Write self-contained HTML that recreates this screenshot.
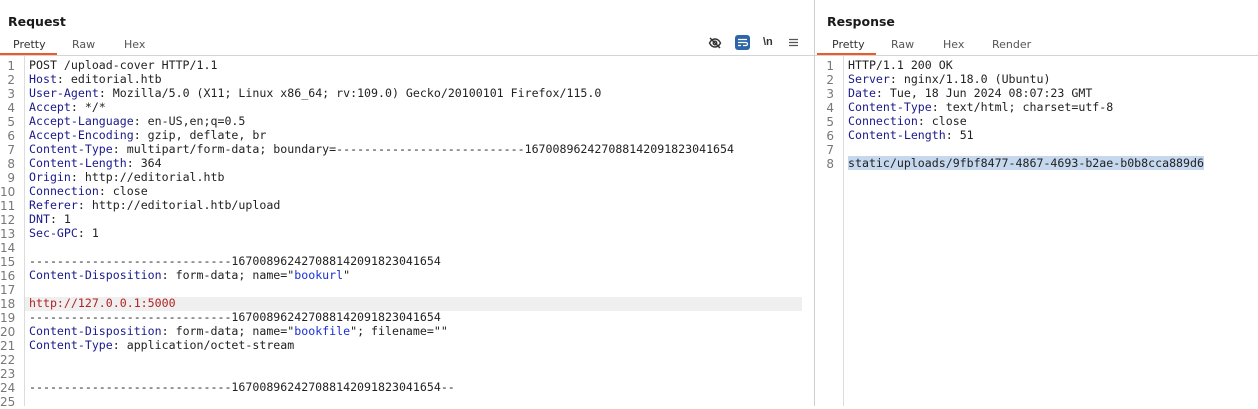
<!DOCTYPE html>
<html><head><meta charset="utf-8"><style>
*{margin:0;padding:0;box-sizing:border-box}
body{width:1258px;height:406px;background:#fff;font-family:"Liberation Sans","DejaVu Sans",sans-serif;position:relative;overflow:hidden;color:#222}
.pane{position:absolute;top:0;height:406px}
.title{position:absolute;top:14px;font-weight:bold;font-size:12.5px;color:#1a1a1a;font-family:"DejaVu Sans",sans-serif}
.tabs{position:absolute;top:36px;left:0;right:0;height:20px;border-bottom:1px solid #d4d4d4}
.tab{position:absolute;top:2px;font-size:11px;color:#555;font-family:"DejaVu Sans",sans-serif}
.tab.a{color:#333}
.ul{position:absolute;top:17px;height:2px;background:#ec5b2c}
.code{position:absolute;top:58px;font-family:"DejaVu Sans Mono",monospace;font-size:11.6px;line-height:14px;white-space:pre;color:#222}
.nums{position:absolute;top:59px;font-family:"DejaVu Sans",sans-serif;font-size:12px;line-height:14px;color:#777;text-align:right;white-space:pre}
.gut{position:absolute;top:56px;bottom:0;width:1px;background:#dcdcdc}
.k{color:#1a1a8c}.s{color:#1a2fd6}.r{color:#b22222}
.hl{position:absolute;height:14px;background:#efefef}
.sel{background:#c6d8ee}
</style></head><body>
<div class="pane" style="left:0;width:814px">
<div class="title" style="left:8px">Request</div>
<div class="tabs">
<div class="tab a" style="left:13px">Pretty</div>
<div class="tab" style="left:72px">Raw</div>
<div class="tab" style="left:124px">Hex</div>
<div class="ul" style="left:0;width:57px"></div>
<svg style="position:absolute;left:708px;top:0" width="14" height="14" viewBox="0 0 14 14"><path d="M1.5 7c1.5-3 3.5-4 5.5-4s4 1 5.5 4c-1.5 3-3.5 4-5.5 4s-4-1-5.5-4z" fill="none" stroke="#333" stroke-width="1.4"/><circle cx="7" cy="7" r="1.8" fill="none" stroke="#333" stroke-width="1.3"/><path d="M2 2l10 10" stroke="#333" stroke-width="1.5"/></svg>
<div style="position:absolute;left:735px;top:-1px;width:15px;height:15px;background:#2d66a8;border-radius:3px"><svg width="15" height="15" viewBox="0 0 15 15"><path d="M3 4.5h9M3 7.5h8a1.5 1.5 0 0 1 0 3H8M3 10.5h3" fill="none" stroke="#fff" stroke-width="1.2"/></svg></div>
<div style="position:absolute;left:763px;top:0;font-size:11px;font-weight:bold;color:#333">\n</div>
<svg style="position:absolute;left:789px;top:2px" width="9" height="9"><path d="M0 1.5h9M0 4.5h9M0 7.5h9" stroke="#555" stroke-width="1.3"/></svg>
</div>
<div class="gut" style="left:24px"></div>
<div class="hl" style="left:25px;width:777px;top:297px"></div>
<div class="nums" style="left:0;width:15px">1
2
3
4
5
6
7
8
9
10
11
12
13
14
15
16
17
18
19
20
21
22
23
24
25</div>
<div class="code" style="left:29px">POST /upload-cover HTTP/1.1
<span class="k">Host</span>: editorial.htb
<span class="k">User-Agent</span>: Mozilla/5.0 (X11; Linux x86_64; rv:109.0) Gecko/20100101 Firefox/115.0
<span class="k">Accept</span>: */*
<span class="k">Accept-Language</span>: en-US,en;q=0.5
<span class="k">Accept-Encoding</span>: gzip, deflate, br
<span class="k">Content-Type</span>: multipart/form-data; boundary=---------------------------167008962427088142091823041654
<span class="k">Content-Length</span>: 364
<span class="k">Origin</span>: http://editorial.htb
<span class="k">Connection</span>: close
<span class="k">Referer</span>: http://editorial.htb/upload
<span class="k">DNT</span>: 1
<span class="k">Sec-GPC</span>: 1

-----------------------------167008962427088142091823041654
<span class="k">Content-Disposition</span>: form-data; name="<span class="s">bookurl</span>"

<span class="r">http://127.0.0.1:5000</span>
-----------------------------167008962427088142091823041654
<span class="k">Content-Disposition</span>: form-data; name="<span class="s">bookfile</span>"; filename="<span class="s"></span>"
<span class="k">Content-Type</span>: application/octet-stream


-----------------------------167008962427088142091823041654--
</div>
</div>
<div style="position:absolute;left:814px;top:0;width:1px;height:406px;background:#cfcfcf"></div>
<div class="pane" style="left:815px;width:443px">
<div class="title" style="left:12px">Response</div>
<div class="tabs">
<div class="tab a" style="left:17px">Pretty</div>
<div class="tab" style="left:76px">Raw</div>
<div class="tab" style="left:128px">Hex</div>
<div class="tab" style="left:177px">Render</div>
<div class="ul" style="left:2px;width:59px"></div>
</div>
<div class="gut" style="left:28px"></div>
<div class="nums" style="left:0;width:19px">1
2
3
4
5
6
7
8</div>
<div class="code" style="left:33px">HTTP/1.1 200 OK
<span class="k">Server</span>: nginx/1.18.0 (Ubuntu)
<span class="k">Date</span>: Tue, 18 Jun 2024 08:07:23 GMT
<span class="k">Content-Type</span>: text/html; charset=utf-8
<span class="k">Connection</span>: close
<span class="k">Content-Length</span>: 51

<span class="sel">static/uploads/9fbf8477-4867-4693-b2ae-b0b8cca889d6</span></div>
</div>
</body></html>
